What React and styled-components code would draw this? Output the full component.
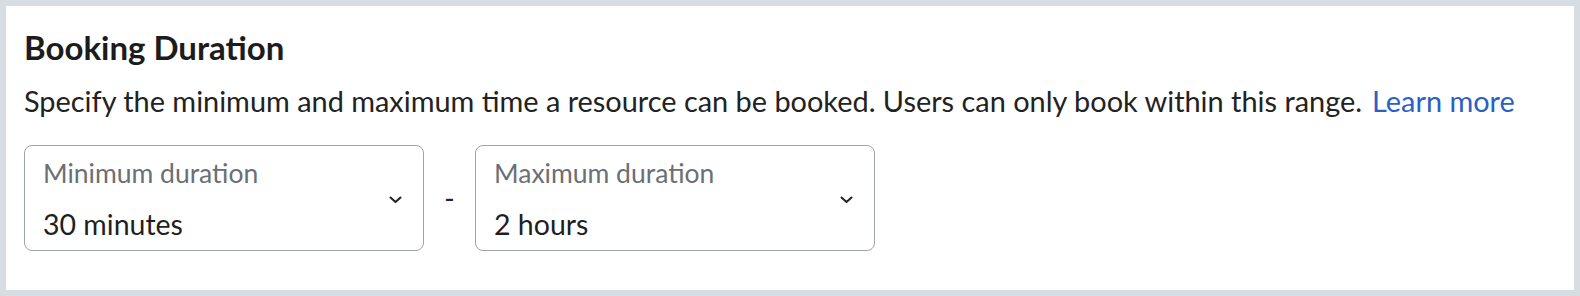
import styled, { createGlobalStyle } from 'styled-components';

const GlobalStyle = createGlobalStyle`
  html, body {
    margin: 0;
    padding: 0;
    background: #d6dee4;
  }
  body {
    font-family: Lato, "Open Sans", sans-serif;
    color: #1f1f1f;
  }
`;

const Frame = styled.div`
  padding: 6px;
  height: 296px;
  box-sizing: border-box;
`;

const Card = styled.section`
  background: #ffffff;
  height: 100%;
  box-sizing: border-box;
  padding: 22px 18px 0 18px;
`;

const Title = styled.h2`
  margin: 0;
  font-size: 33px;
  line-height: 38px;
  font-weight: 700;
  color: #1c1c1c;
`;

const Description = styled.p`
  margin: 18px 0 0 0;
  font-size: 28.9px;
  line-height: 34px;
  color: #222222;
`;

const Link = styled.a`
  color: #2b5fc4;
  text-decoration: none;
  margin-left: 10px;
  cursor: pointer;
`;

const Row = styled.div`
  display: flex;
  align-items: center;
  margin-top: 27px;
`;

const Select = styled.div`
  position: relative;
  width: 400px;
  height: 106px;
  box-sizing: border-box;
  border: 1.5px solid #9fa4a9;
  border-radius: 8px;
  padding: 11.5px 18px 0 18px;
  background: #fff;
`;

const Label = styled.div`
  font-size: 26.5px;
  line-height: 31px;
  color: #6a6f75;
`;

const Value = styled.div`
  margin-top: 18px;
  font-size: 28.5px;
  line-height: 34px;
  color: #1f1f1f;
`;

const Chevron = styled.svg`
  position: absolute;
  right: 21px;
  top: 50px;
  width: 13px;
  height: 8px;
`;

const Dash = styled.span`
  width: 51px;
  text-align: center;
  font-size: 28px;
  color: #222;
`;

function DurationSelect({ label, value }) {
  return (
    <Select>
      <Label>{label}</Label>
      <Value>{value}</Value>
      <Chevron viewBox="0 0 13 8" fill="none">
        <path d="M1.5 1.5 L6.5 6 L11.5 1.5" stroke="#222" strokeWidth="2" strokeLinecap="round" strokeLinejoin="round" />
      </Chevron>
    </Select>
  );
}

export default function App() {
  return (
    <Frame>
      <GlobalStyle />
      <Card>
        <Title>Booking Duration</Title>
        <Description>
          Specify the minimum and maximum time a resource can be booked. Users can only book within this range.
          <Link>Learn more</Link>
        </Description>
        <Row>
          <DurationSelect label="Minimum duration" value="30 minutes" />
          <Dash>-</Dash>
          <DurationSelect label="Maximum duration" value="2 hours" />
        </Row>
      </Card>
    </Frame>
  );
}
